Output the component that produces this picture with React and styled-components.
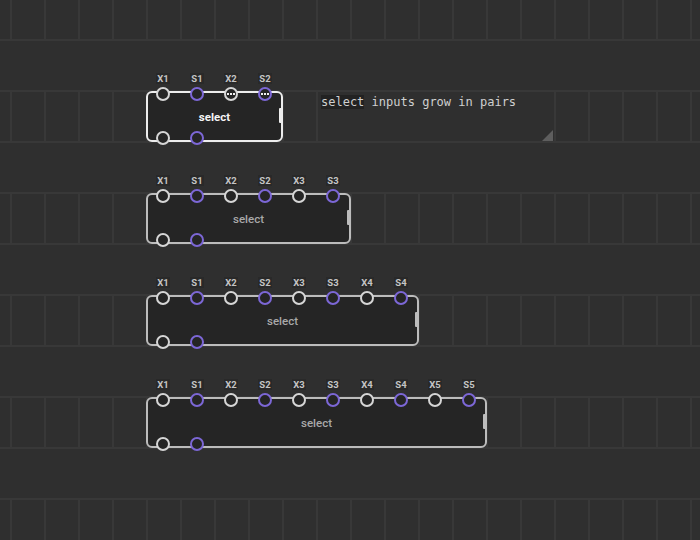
import React from 'react';
import styled, { createGlobalStyle } from 'styled-components';

const BG = '#2f2f2f';
const LINE = '#383838';
const PURPLE = '#7c67d6';

const GlobalStyle = createGlobalStyle`
  html, body { margin: 0; padding: 0; background: ${BG}; }
  body { width: 700px; height: 540px; overflow: hidden; font-family: Roboto, "Liberation Sans", sans-serif; }
`;

const Canvas = styled.div`
  position: relative;
  width: 700px;
  height: 540px;
  overflow: hidden;
  background-color: ${BG};
  background-image:
    linear-gradient(to bottom, ${LINE} 0 2px, transparent 2px),
    linear-gradient(to bottom, transparent 0 51px, ${BG} 51px),
    linear-gradient(to right, ${LINE} 0 2px, transparent 2px);
  background-size: 34px 51px, 34px 102px, 34px 102px;
  background-position: 10px -12px;
`;

const NodeBox = styled.div`
  position: absolute;
  left: ${(p) => p.$x}px;
  top: ${(p) => p.$y}px;
  width: ${(p) => p.$w}px;
  height: 51px;
`;

const Body = styled.div`
  box-sizing: border-box;
  width: 100%;
  height: 100%;
  border: 2px solid ${(p) => (p.$selected ? '#ededed' : '#bcbcbc')};
  border-radius: 6px;
  background: #252525;
  display: flex;
  align-items: center;
  justify-content: center;
  padding-top: 1px;
  font-family: Roboto, "Liberation Sans", sans-serif;
  font-size: 11.5px;
  font-weight: ${(p) => (p.$selected ? 700 : 500)};
  color: ${(p) => (p.$selected ? '#f4f4f4' : '#a9a9a9')};
`;

const Handle = styled.div`
  position: absolute;
  right: 0;
  top: 17px;
  width: 4px;
  height: 15px;
  border-radius: 1px;
  background: ${(p) => (p.$selected ? '#ededed' : '#bcbcbc')};
`;

const PinRow = styled.div`
  position: absolute;
  left: 0;
  top: ${(p) => p.$top}px;
  display: flex;
`;

const PinColumn = styled.div`
  width: 34px;
  display: flex;
  flex-direction: column;
  align-items: center;
  gap: 3px;
`;

const Label = styled.span`
  height: 11px;
  line-height: 11px;
  padding: 0 1px;
  background: #292929;
  color: #c4c4c4;
  font-family: Roboto, "Liberation Sans", sans-serif;
  font-size: 9.5px;
  font-weight: 700;
`;

const Pin = styled.div`
  box-sizing: border-box;
  width: 14px;
  height: 14px;
  border-radius: 50%;
  border: 2px solid ${(p) => (p.$kind === 's' ? PURPLE : '#d6d6d6')};
  background: #252525;
  display: flex;
  align-items: center;
  justify-content: center;
  gap: 1px;
`;

const Dot = styled.span`
  width: 2px;
  height: 2px;
  background: #f0f0f0;
`;

const Comment = styled.div`
  position: absolute;
  left: 318px;
  top: 92px;
  width: 235px;
  height: 49px;
  box-sizing: border-box;
  padding: 3px 0 0 3px;
  background: ${BG};
  font-family: "DejaVu Sans Mono", "Liberation Mono", monospace;
  font-size: 12px;
  line-height: 15px;
  color: #cfcfcf;
  white-space: pre;
`;

const Code = styled.span`
  background: #222222;
`;

const ResizeCorner = styled.svg`
  position: absolute;
  right: 0;
  bottom: 0;
`;

function Node({ x, y, count, selected, dotted }) {
  const cols = Array.from({ length: count }, (_, i) => ({
    label: `${i % 2 === 0 ? 'X' : 'S'}${Math.floor(i / 2) + 1}`,
    kind: i % 2 === 0 ? 'x' : 's',
    dots: dotted && i >= 2,
  }));
  return (
    <NodeBox $x={x} $y={y} $w={count * 34 + 1}>
      <Body $selected={selected}>select</Body>
      <Handle $selected={selected} />
      <PinRow $top={-18}>
        {cols.map((c) => (
          <PinColumn key={c.label}>
            <Label>{c.label}</Label>
            <Pin $kind={c.kind}>
              {c.dots && (
                <>
                  <Dot />
                  <Dot />
                  <Dot />
                </>
              )}
            </Pin>
          </PinColumn>
        ))}
      </PinRow>
      <PinRow $top={40}>
        <PinColumn>
          <Pin $kind="x" />
        </PinColumn>
        <PinColumn>
          <Pin $kind="s" />
        </PinColumn>
      </PinRow>
    </NodeBox>
  );
}

export default function App() {
  return (
    <Canvas>
      <GlobalStyle />
      <Node x={146} y={91} count={4} selected dotted />
      <Node x={146} y={193} count={6} />
      <Node x={146} y={295} count={8} />
      <Node x={146} y={397} count={10} />
      <Comment>
        <Code>select</Code> inputs grow in pairs
        <ResizeCorner width="11" height="11" viewBox="0 0 11 11">
          <path d="M11 0 L11 11 L0 11 Z" fill="#5e5e5e" />
        </ResizeCorner>
      </Comment>
    </Canvas>
  );
}
